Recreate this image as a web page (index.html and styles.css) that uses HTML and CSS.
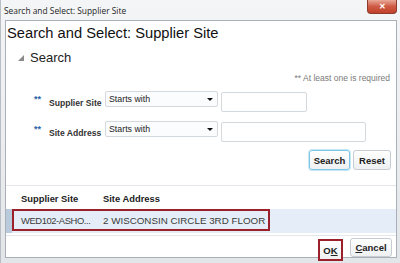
FILE: index.html
```html
<!DOCTYPE html>
<html lang="en">
<head>
    <meta charset="UTF-8">
    <title>Search and Select: Supplier Site</title>
    <link rel="stylesheet" href="styles.css">
</head>
<body>

<div class="window">
    <div class="titlebar">
        <span class="wtitle">Search and Select: Supplier Site</span>
        <span class="close">&#x2715;</span>
    </div>

    <div class="panel">
        <h2>Search and Select: Supplier Site</h2>

        <div class="section-head"><span class="tri"></span>Search</div>

        <div class="req">** At least one is required</div>

        <div class="frow">
            <span class="stars">**</span>
            <label>Supplier Site</label>
            <div class="sel">Starts with<span class="arrow"></span></div>
            <div class="txt short"></div>
        </div>
        <div class="frow">
            <span class="stars">**</span>
            <label>Site Address</label>
            <div class="sel">Starts with<span class="arrow"></span></div>
            <div class="txt long"></div>
        </div>

        <div class="btns">
            <button class="btn focus">Search</button>
            <button class="btn">Reset</button>
        </div>

        <div class="results">
            <div class="thead">
                <span class="c1">Supplier Site</span>
                <span class="c2">Site Address</span>
            </div>
            <div class="trow">
                <div class="mark"></div>
                <div class="cells">
                    <span class="c1 trunc">WED102-ASHO...</span>
                    <span class="c2">2 WISCONSIN CIRCLE 3RD FLOOR</span>
                </div>
            </div>
        </div>

        <div class="footer">
            <button class="btn ok">O<u>K</u></button>
            <button class="btn cancel"><u>C</u>ancel</button>
        </div>
    </div>
</div>

</body>
</html>
```

FILE: styles.css
```css
body {
    margin: 0;
    width: 400px;
    height: 263px;
    overflow: hidden;
    background: #e6e9ec;
    font-family: "Liberation Sans", Arial, sans-serif;
}
.window {
    height: 263px;
    padding: 0 4px;
    background: linear-gradient(#f4f5f6, #e3e6e9);
    border-left: 1px solid #b9bec4;
    box-sizing: border-box;
    white-space: nowrap;
}
.titlebar {
    height: 20px;
    display: flex;
    align-items: center;
    position: relative;
}
.wtitle {
    font-family: "Open Sans", "DejaVu Sans", sans-serif;
    font-size: 8.4px;
    color: #1e1e1e;
    margin-left: -1px;
    margin-top: 1px;
}
.close {
    position: absolute;
    right: -1px;
    top: 0;
    width: 28px;
    height: 13px;
    background: linear-gradient(#e9a898, #cf5a43 50%, #c0412c);
    border: 1px solid #8e3a2d;
    border-top: none;
    border-radius: 0 0 4px 4px;
    color: #fff;
    font-size: 8px;
    font-weight: bold;
    text-align: center;
    line-height: 13px;
}
.panel {
    background: #fff;
    border: 1px solid #a9b0b8;
    height: 238px;
    box-sizing: border-box;
    margin-right: -1px;
}
h2 {
    margin: 3px 0 0 0;
    padding-left: 1px;
    font-size: 14.7px;
    font-weight: normal;
    color: #111;
    line-height: 18px;
}
.section-head {
    margin-top: 6px;
    padding-left: 12px;
    font-size: 13px;
    color: #222;
    display: flex;
    align-items: center;
    height: 18px;
}
.tri {
    width: 0;
    height: 0;
    border-left: 6px solid transparent;
    border-bottom: 6px solid #8a8a8a;
    margin: 2px 6px 0 0;
}
.req {
    text-align: right;
    font-size: 8.5px;
    line-height: 12px;
    color: #7a7a7a;
    padding-right: 6px;
    margin-top: 6px;
}
.frow {
    display: flex;
    align-items: flex-start;
    height: 20px;
    margin-top: 8px;
}
.frow + .frow {
    margin-top: 10px;
}
.stars {
    width: 15px;
    margin: 2px 0 0 28px;
    color: #2a63a8;
    font-weight: bold;
    font-size: 9px;
}
label {
    width: 56px;
    font-size: 8.6px;
    font-weight: bold;
    color: #333;
    margin-top: 6px;
}
.sel {
    width: 113px;
    height: 16px;
    border: 1px solid #d4d9de;
    border-radius: 2px;
    background: #fbfcfd;
    font-size: 8.8px;
    color: #222;
    padding-left: 3px;
    box-sizing: border-box;
    margin: -1px 3px 0 0;
    display: flex;
    align-items: center;
    position: relative;
}
.arrow {
    position: absolute;
    right: 4px;
    top: 6px;
    border-left: 3px solid transparent;
    border-right: 3px solid transparent;
    border-top: 3px solid #111;
}
.txt {
    height: 20px;
    border: 1px solid #d4d9de;
    border-radius: 2px;
    box-sizing: border-box;
    background: #fff;
}
.short { width: 86px; }
.long { width: 145px; }
.btns {
    display: flex;
    justify-content: flex-end;
    gap: 3px;
    padding-right: 5px;
    margin-top: 8px;
}
.btn {
    font-family: "Liberation Sans", Arial, sans-serif;
    font-size: 9.5px;
    font-weight: bold;
    color: #222;
    background: linear-gradient(#ffffff, #eef0f2);
    border: 1px solid #c6ccd2;
    border-radius: 3px;
    height: 20px;
    padding: 0;
}
.btn.focus {
    width: 41px;
    border-color: #7fc6e6;
    box-shadow: 0 0 0 1px #c6e8f6;
}
.btns .btn:last-child { width: 38px; }
.results {
    margin-top: 15px;
    border-top: 1px solid #e3e6ea;
    border-bottom: 1px solid #e3e6ea;
    padding-bottom: 2px;
}
.thead {
    display: flex;
    height: 23px;
    align-items: center;
    font-size: 9.4px;
    font-weight: bold;
    color: #222;
    padding-top: 1px;
    box-sizing: border-box;
}
.c1 { width: 82px; padding-left: 15px; }
.trow {
    display: flex;
    height: 24px;
    background: #e5eef8;
}
.mark {
    width: 6px;
    background: #b9cadc;
}
.cells {
    display: flex;
    align-items: center;
    width: 258px;
    height: 22px;
    border: 2px solid #9c1f2c;
    box-sizing: border-box;
    font-size: 9.8px;
    color: #3a3a3a;
}
.cells .c1 { padding-left: 7px; width: 82px; }
.trunc { letter-spacing: -0.4px; font-size: 9.4px; }
.footer {
    display: flex;
    justify-content: flex-end;
    align-items: flex-start;
    gap: 7px;
    padding: 2px 4px 0 0;
}
.btn.ok {
    border: 2px solid #9c1f2c;
    border-radius: 0;
    width: 25px;
    height: 22px;
    margin-top: 1px;
}
.btn.cancel {
    width: 42px;
    height: 19px;
}
```
